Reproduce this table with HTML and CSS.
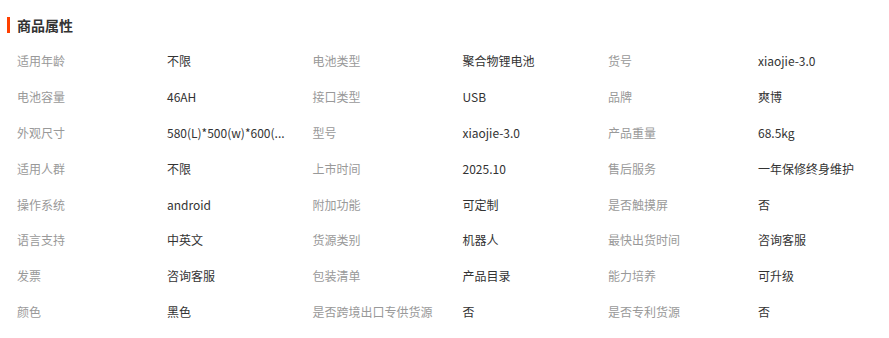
FILE: index.html
```html
<!DOCTYPE html>
<html lang="zh">
<head>
<meta charset="utf-8">
<link rel="stylesheet" href="styles.css">
</head>
<body>
<div class="attrs">
  <h2 class="title">商品属性</h2>
  <div class="grid">
    <div class="k">适用年龄</div><div class="v">不限</div>
    <div class="k">电池类型</div><div class="v">聚合物锂电池</div>
    <div class="k">货号</div><div class="v">xiaojie-3.0</div>

    <div class="k">电池容量</div><div class="v">46AH</div>
    <div class="k">接口类型</div><div class="v">USB</div>
    <div class="k">品牌</div><div class="v">爽博</div>

    <div class="k">外观尺寸</div><div class="v">580(L)*500(w)*600(...</div>
    <div class="k">型号</div><div class="v">xiaojie-3.0</div>
    <div class="k">产品重量</div><div class="v">68.5kg</div>

    <div class="k">适用人群</div><div class="v">不限</div>
    <div class="k">上市时间</div><div class="v">2025.10</div>
    <div class="k">售后服务</div><div class="v">一年保修终身维护</div>

    <div class="k">操作系统</div><div class="v">android</div>
    <div class="k">附加功能</div><div class="v">可定制</div>
    <div class="k">是否触摸屏</div><div class="v">否</div>

    <div class="k">语言支持</div><div class="v">中英文</div>
    <div class="k">货源类别</div><div class="v">机器人</div>
    <div class="k">最快出货时间</div><div class="v">咨询客服</div>

    <div class="k">发票</div><div class="v">咨询客服</div>
    <div class="k">包装清单</div><div class="v">产品目录</div>
    <div class="k">能力培养</div><div class="v">可升级</div>

    <div class="k">颜色</div><div class="v">黑色</div>
    <div class="k">是否跨境出口专供货源</div><div class="v">否</div>
    <div class="k">是否专利货源</div><div class="v">否</div>
  </div>
</div>
</body>
</html>
```

FILE: styles.css
```css
* { box-sizing: border-box; }
html, body { margin: 0; padding: 0; background: #fff; }
body {
  font-family: "Noto Sans CJK SC", "Microsoft YaHei", sans-serif;
  font-size: 12px;
  color: #333;
}
.attrs { padding: 17px 0 0 7px; }
.title {
  margin: 0;
  font-size: 14px;
  font-weight: bold;
  line-height: 16px;
  color: #333;
  border-left: 3px solid #ff4000;
  padding-left: 7px;
  height: 16px;
  display: flex;
  align-items: center;
}
.grid {
  display: grid;
  grid-template-columns: 150px 145.5px 150px 145.5px 150px 131px;
  grid-auto-rows: 35.9px;
  margin-top: 19px;
  padding-left: 10px;
}
.k, .v {
  line-height: 18px;
  white-space: nowrap;
}
.k { color: #999; }
.v { color: #333; }
```
